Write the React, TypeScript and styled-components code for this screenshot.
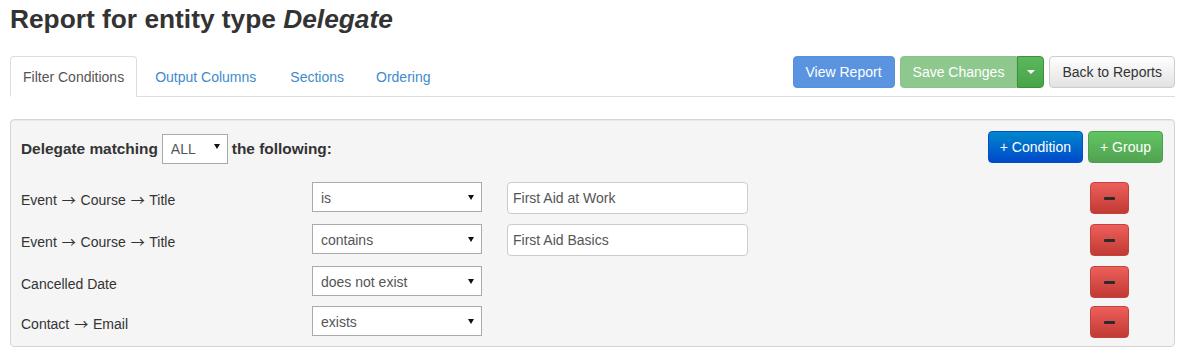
import { styled, createGlobalStyle } from 'styled-components';

const GlobalStyle = createGlobalStyle`
  html, body {
    margin: 0;
    padding: 0;
    background: #fff;
  }
  body {
    font-family: 'Liberation Sans', Arial, sans-serif;
    font-size: 14px;
    line-height: 20px;
    color: #333;
  }
  * {
    box-sizing: border-box;
  }
`;

interface ICondition {
  path: string[];
  operator: string;
  value?: string;
}

const conditions: ICondition[] = [
  { path: ['Event', 'Course', 'Title'], operator: 'is', value: 'First Aid at Work' },
  { path: ['Event', 'Course', 'Title'], operator: 'contains', value: 'First Aid Basics' },
  { path: ['Cancelled Date'], operator: 'does not exist' },
  { path: ['Contact', 'Email'], operator: 'exists' },
];

const tabs = ['Filter Conditions', 'Output Columns', 'Sections', 'Ordering'];

function SelectBox({ value, width }: { value: string; width: number }) {
  return (
    <SelectWrap style={{ width }}>
      <Select defaultValue={value}>
        <option>{value}</option>
      </Select>
      <SelectArrow />
    </SelectWrap>
  );
}

export default function App() {
  return (
    <Page>
      <GlobalStyle />
      <Title>
        Report for entity type <em>Delegate</em>
      </Title>

      <TabBar>
        <Tabs>
          {tabs.map((tab, i) => (
            <Tab key={tab} $active={i === 0}>
              {tab}
            </Tab>
          ))}
        </Tabs>
        <Actions>
          <ViewButton>View Report</ViewButton>
          <SplitGroup>
            <SaveButton disabled>Save Changes</SaveButton>
            <CaretButton>
              <Caret />
            </CaretButton>
          </SplitGroup>
          <DefaultButton>Back to Reports</DefaultButton>
        </Actions>
      </TabBar>

      <Panel>
        <PanelHeader>
          <Matching>
            Delegate matching
            <SelectBox value="ALL" width={66} />
            the following:
          </Matching>
          <HeaderButtons>
            <PrimaryButton>+ Condition</PrimaryButton>
            <SuccessButton>+ Group</SuccessButton>
          </HeaderButtons>
        </PanelHeader>

        {conditions.map((c, i) => (
          <Row key={i} $hasValue={!!c.value}>
            <FieldLabel>
              {c.path.map((part, j) => (
                <span key={j}>
                  {j > 0 && (
                    <>
                      {' '}
                      <Arrow>→</Arrow>{' '}
                    </>
                  )}
                  {part}
                </span>
              ))}
            </FieldLabel>
            <SelectBox value={c.operator} width={170} />
            {c.value && <ValueInput defaultValue={c.value} />}
            <RemoveButton>
              <MinusIcon />
            </RemoveButton>
          </Row>
        ))}
      </Panel>
    </Page>
  );
}

const Page = styled.div`
  padding: 0 8px 0 10px;
`;

const Title = styled.h1`
  margin: 0;
  padding-top: 5px;
  font-size: 26.3px;
  line-height: 28px;
  font-weight: bold;
  color: #333;

  em {
    font-style: italic;
  }
`;

const TabBar = styled.div`
  margin-top: 23px;
  display: flex;
  justify-content: space-between;
  align-items: flex-start;
  border-bottom: 1px solid #ddd;
  height: 41px;
`;

const Tabs = styled.ul`
  list-style: none;
  margin: 0;
  padding: 0;
  display: flex;
`;

const Tab = styled.li<{ $active?: boolean }>`
  margin-right: 2px;
  padding: 10px 15px;
  height: 41px;
  border: 1px solid ${({ $active }) => ($active ? '#ddd' : 'transparent')};
  border-bottom-color: ${({ $active }) => ($active ? '#fff' : 'transparent')};
  border-radius: 4px 4px 0 0;
  background: ${({ $active }) => ($active ? '#fff' : 'transparent')};
  color: ${({ $active }) => ($active ? '#555' : '#428bca')};
  cursor: pointer;

  &:first-child {
    padding: 10px 12px;
  }

  &:last-child {
    margin-left: -2px;
  }
`;

const Actions = styled.div`
  display: flex;
  gap: 5px;
`;

const BaseButton = styled.button`
  font-family: inherit;
  font-size: 14px;
  line-height: 20px;
  height: 32px;
  padding: 5px 12px;
  border-radius: 4px;
  border: 1px solid transparent;
  color: #fff;
  cursor: pointer;
  white-space: nowrap;
`;

const ViewButton = styled(BaseButton)`
  background: #5a94e0;
  border-color: #5590dc;
`;

const SplitGroup = styled.div`
  display: flex;
`;

const SaveButton = styled(BaseButton)`
  background: #8ec88e;
  border-color: #86c386;
  border-radius: 4px 0 0 4px;
  cursor: not-allowed;
  color: #fff;
`;

const CaretButton = styled(BaseButton)`
  width: 27px;
  padding: 0;
  display: flex;
  align-items: center;
  justify-content: center;
  border-radius: 0 4px 4px 0;
  background: linear-gradient(#5cb85c, #47a447);
  border-color: #3e8f3e;
`;

const Caret = styled.span`
  width: 0;
  height: 0;
  border-left: 4px solid transparent;
  border-right: 4px solid transparent;
  border-top: 4px solid #fff;
`;

const DefaultButton = styled(BaseButton)`
  color: #333;
  background: linear-gradient(#fff, #e2e2e2);
  border-color: #ccc;
`;

const Panel = styled.div`
  margin-top: 22px;
  background: #f5f5f5;
  border: 1px solid #d6d6d6;
  border-radius: 4px;
  box-shadow: inset 0 1px 1px rgba(0, 0, 0, 0.05);
  padding: 11px 10px 10px 10px;
  height: 228px;
`;

const PanelHeader = styled.div`
  display: flex;
  justify-content: space-between;
  align-items: flex-start;
  margin-bottom: 19px;
`;

const Matching = styled.div`
  display: flex;
  align-items: flex-start;
  gap: 4px;
  height: 30px;
  font-size: 15.4px;
  line-height: 36px;
  font-weight: bold;
  color: #333;
`;

const HeaderButtons = styled.div`
  display: flex;
  gap: 5px;
  margin-right: 1px;
`;

const PrimaryButton = styled(BaseButton)`
  padding: 5px 11px;
  background: linear-gradient(#0088cc, #0049cc);
  border-color: #0050c0;
`;

const SuccessButton = styled(BaseButton)`
  padding: 5px 11px;
  background: linear-gradient(#62c462, #51a351);
  border-color: #4c9e4c;
`;

const Row = styled.div<{ $hasValue?: boolean }>`
  display: flex;
  align-items: flex-start;
  height: ${({ $hasValue }) => ($hasValue ? 32 : 30)}px;
  margin-bottom: 10px;

  &:last-child {
    margin-bottom: 0;
  }
`;

const FieldLabel = styled.div`
  width: 291px;
  padding-top: 8px;
  color: #333;
  white-space: nowrap;
`;

const Arrow = styled.span`
  font-family: 'Noto Sans CJK JP', 'DejaVu Sans', sans-serif;
  font-size: 14px;
  line-height: 1;
  margin: 0 1px;
`;

const SelectWrap = styled.div`
  position: relative;
  height: 30px;
`;

const Select = styled.select`
  appearance: none;
  width: 100%;
  height: 30px;
  padding: 1px 20px 0 8px;
  font-family: 'Liberation Sans', Arial, sans-serif;
  font-size: 14px;
  line-height: 20px;
  font-weight: normal;
  color: #555;
  background: #fff;
  border: 1px solid #aaa;
  border-radius: 0;
  outline: none;
`;

const SelectArrow = styled.span`
  position: absolute;
  right: 8px;
  top: 13px;
  width: 0;
  height: 0;
  border-left: 3.5px solid transparent;
  border-right: 3.5px solid transparent;
  border-top: 5px solid #111;
  pointer-events: none;
`;

const ValueInput = styled.input`
  margin-left: 25px;
  width: 241px;
  height: 32px;
  padding: 6px 5px;
  font-family: inherit;
  font-size: 14px;
  color: #555;
  background: #fff;
  border: 1px solid #ccc;
  border-radius: 4px;
  outline: none;
`;

const RemoveButton = styled(BaseButton)`
  margin-left: auto;
  margin-right: 35px;
  width: 39px;
  padding: 0;
  display: flex;
  align-items: center;
  justify-content: center;
  flex-shrink: 0;
  background: linear-gradient(#ee5f5b, #c13a33);
  border-color: #c8423c;
`;

const MinusIcon = styled.span`
  width: 11px;
  height: 3px;
  border-radius: 1px;
  background: #2b2b2b;
`;
